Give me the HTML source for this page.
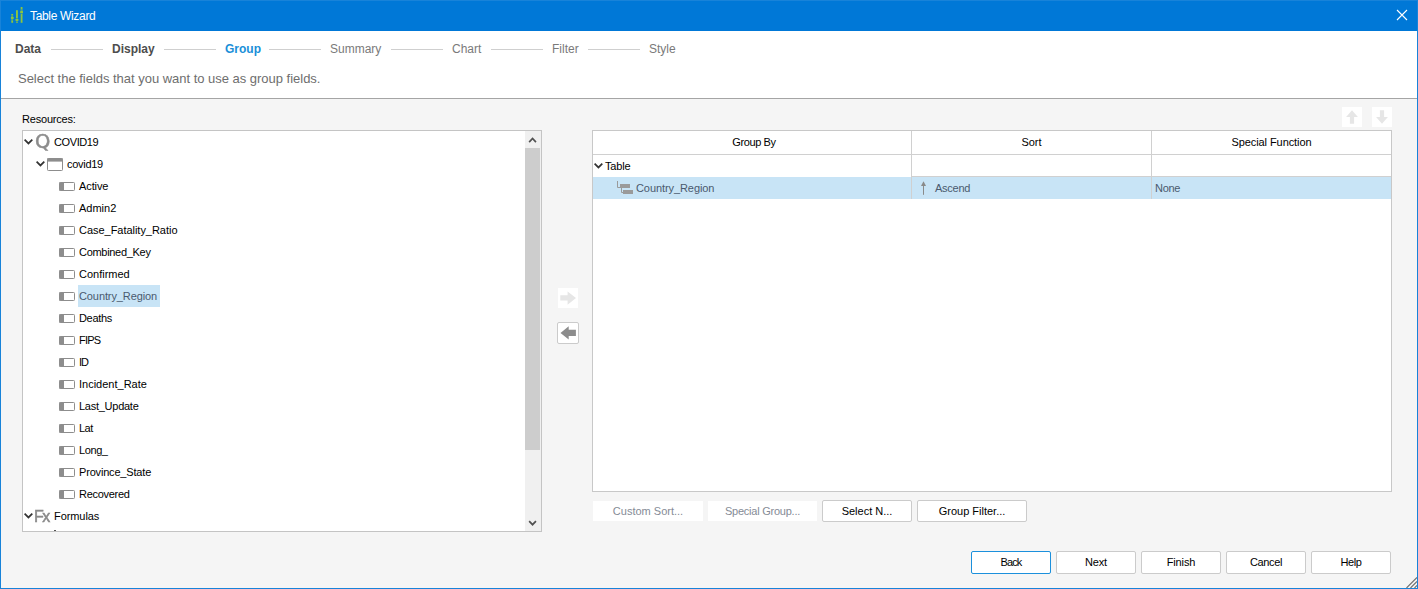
<!DOCTYPE html><html><head><meta charset="utf-8"><title>Table Wizard</title><style>
*{box-sizing:border-box;margin:0;padding:0}
html,body{width:1418px;height:589px;overflow:hidden;background:#f5f5f5}
body{position:relative;font-family:"Liberation Sans",sans-serif;font-size:11px;color:#000}
.abs{position:absolute}
.t{position:absolute;white-space:nowrap;line-height:22px;height:22px}
#titlebar{left:0;top:0;width:1418px;height:31px;background:#0078d7}
#title{left:30px;top:5px;color:#fff;font-size:12px;line-height:22px;letter-spacing:-0.33px}
#hdr{left:1px;top:31px;width:1416px;height:67px;background:#fff}
#sep{left:1px;top:98px;width:1416px;height:1px;background:#a5a5a5}
#bl{left:0;top:0;width:1px;height:589px;background:#1883d9}
#br{left:1417px;top:0;width:1px;height:589px;background:#1883d9}
#bb{left:0;top:588px;width:1418px;height:1px;background:#1883d9}
#bt{left:0;top:0;width:1418px;height:1px;background:#1883d9}
.step{position:absolute;top:38px;line-height:22px;font-size:12px;white-space:nowrap}
.step.b{font-weight:bold;color:#4d4d4d}
.step.cur{font-weight:bold;color:#1b8fd8}
.step.n{color:#7a7a7a}
.sline{position:absolute;top:49px;height:1px;background:#cfcfcf;width:52px}
#desc{left:18px;top:68px;font-size:13px;color:#6e6e6e;line-height:22px;letter-spacing:-0.02px}
#tree{left:22px;top:130px;width:520px;height:402px;background:#fff;border:1px solid #c4c4c4;overflow:hidden}
#sbtrack{left:525px;top:131px;width:16px;height:400px;background:#f0f0f0}
#sbthumb{left:525px;top:148px;width:15px;height:302px;background:#cdcdcd}
.sel{position:absolute;background:#c8e4f6}
.seltext{color:#4a5a6e}
#grid{left:592px;top:130px;width:800px;height:362px;background:#fff;border:1px solid #c8c8c8}
.vl{position:absolute;width:1px;background:#d0d0d0}
.hl{position:absolute;height:1px;background:#d0d0d0}
.btn{position:absolute;background:#fff;border:1px solid #cbcbcb;border-radius:2px;text-align:center;line-height:20px;font-size:11px;white-space:nowrap}
.btn.dis{border:1px solid #f5f5f5;color:#858b96;border-radius:0}
.btn.def{border:1px solid #1c90dc}
.ibtn{position:absolute;background:#fff}
</style></head><body>
<div class="abs" id="titlebar"></div>
<div class="abs" id="hdr"></div><div class="abs" id="sep"></div>
<svg class="abs" style="left:10px;top:6px" width="14" height="18" viewBox="10 6 14 18">
<g fill="#8cc63f"><rect x="11.3" y="14" width="1.8" height="8.8"/><rect x="10.9" y="17" width="2.8" height="1.8"/>
<rect x="16" y="10.2" width="1.9" height="12.6"/><rect x="15.5" y="19" width="2.9" height="1.8"/>
<rect x="20.7" y="7" width="1.8" height="15.8"/><rect x="20.2" y="11.2" width="2.8" height="1.8"/></g>
<g fill="#0078d7"><rect x="11.3" y="15.6" width="1.8" height="0.7"/><rect x="11.3" y="19.6" width="1.8" height="0.7"/><rect x="16" y="21.4" width="1.9" height="0.7"/><rect x="16" y="18" width="1.9" height="0.6"/><rect x="20.7" y="9.6" width="1.8" height="0.8"/><rect x="20.7" y="13.4" width="1.8" height="0.6"/></g></svg>
<div class="t" id="title">Table Wizard</div>
<svg class="abs" style="left:1396px;top:9px" width="12" height="12" viewBox="0 0 12 12"><path d="M1 1 L11 11 M11 1 L1 11" stroke="#fff" stroke-width="1.1" fill="none"/></svg>
<div class="step b" style="left:15px">Data</div>
<div class="step b" style="left:112px">Display</div>
<div class="step cur" style="left:225px">Group</div>
<div class="step n" style="left:330px">Summary</div>
<div class="step n" style="left:452px">Chart</div>
<div class="step n" style="left:552px">Filter</div>
<div class="step n" style="left:649px">Style</div>
<div class="sline" style="left:51px"></div>
<div class="sline" style="left:164px"></div>
<div class="sline" style="left:269px"></div>
<div class="sline" style="left:391px"></div>
<div class="sline" style="left:491px"></div>
<div class="sline" style="left:588px"></div>
<div class="t" id="desc">Select the fields that you want to use as group fields.</div>
<div class="t" style="left:22px;top:108px;letter-spacing:-0.2px">Resources:</div>
<div class="abs" id="tree"></div>
<div class="abs" id="sbtrack"></div><div class="abs" id="sbthumb"></div>
<svg class="abs" style="left:525px;top:131px" width="16" height="17" viewBox="0 0 16 17"><path d="M4.15 11.1 L7.55 7.5 L10.95 11.1" stroke="#505050" stroke-width="1.7" fill="none"/></svg>
<svg class="abs" style="left:525px;top:514px" width="16" height="17" viewBox="0 0 16 17"><path d="M4.15 7.1 L7.55 10.7 L10.95 7.1" stroke="#505050" stroke-width="1.7" fill="none"/></svg>
<svg class="abs" style="left:24px;top:137px" width="10" height="10" viewBox="0 0 10 10"><path d="M0.6 2.6 L4.45 6.45 L8.3 2.6" stroke="#333" stroke-width="1.7" fill="none"/></svg>
<div class="abs" style="left:35px;top:131px;font-family:'DejaVu Sans',sans-serif;font-size:19.5px;line-height:22px;color:#8c8c8c;-webkit-text-stroke:0.5px #8c8c8c;will-change:transform">Q</div>
<div class="t" style="left:54px;top:131px;letter-spacing:-0.4px">COVID19</div>
<svg class="abs" style="left:36px;top:159px" width="10" height="10" viewBox="0 0 10 10"><path d="M0.6 2.6 L4.45 6.45 L8.3 2.6" stroke="#333" stroke-width="1.7" fill="none"/></svg>
<svg class="abs" style="left:47px;top:158px" width="16" height="13" viewBox="0 0 16 13"><rect x="0.5" y="0.5" width="15" height="12" rx="0.8" fill="#fff" stroke="#8d8d8d"/><rect x="0.3" y="0.3" width="15.4" height="3.3" fill="#8d8d8d"/></svg>
<div class="t" style="left:67px;top:153px;letter-spacing:-0.28px">covid19</div>
<svg class="abs" style="left:59px;top:182px" width="16" height="9" viewBox="0 0 16 9"><rect x="0.5" y="0.5" width="15" height="8" rx="0.8" fill="#fff" stroke="#8d8d8d"/><rect x="0.3" y="0.3" width="4.7" height="8.4" fill="#8d8d8d"/></svg>
<div class="t" style="left:79px;top:175px;letter-spacing:-0.1px">Active</div>
<svg class="abs" style="left:59px;top:204px" width="16" height="9" viewBox="0 0 16 9"><rect x="0.5" y="0.5" width="15" height="8" rx="0.8" fill="#fff" stroke="#8d8d8d"/><rect x="0.3" y="0.3" width="4.7" height="8.4" fill="#8d8d8d"/></svg>
<div class="t" style="left:79px;top:197px;letter-spacing:0px">Admin2</div>
<svg class="abs" style="left:59px;top:226px" width="16" height="9" viewBox="0 0 16 9"><rect x="0.5" y="0.5" width="15" height="8" rx="0.8" fill="#fff" stroke="#8d8d8d"/><rect x="0.3" y="0.3" width="4.7" height="8.4" fill="#8d8d8d"/></svg>
<div class="t" style="left:79px;top:219px;letter-spacing:-0.03px">Case_Fatality_Ratio</div>
<svg class="abs" style="left:59px;top:248px" width="16" height="9" viewBox="0 0 16 9"><rect x="0.5" y="0.5" width="15" height="8" rx="0.8" fill="#fff" stroke="#8d8d8d"/><rect x="0.3" y="0.3" width="4.7" height="8.4" fill="#8d8d8d"/></svg>
<div class="t" style="left:79px;top:241px;letter-spacing:-0.3px">Combined_Key</div>
<svg class="abs" style="left:59px;top:270px" width="16" height="9" viewBox="0 0 16 9"><rect x="0.5" y="0.5" width="15" height="8" rx="0.8" fill="#fff" stroke="#8d8d8d"/><rect x="0.3" y="0.3" width="4.7" height="8.4" fill="#8d8d8d"/></svg>
<div class="t" style="left:79px;top:263px;letter-spacing:0px">Confirmed</div>
<svg class="abs" style="left:59px;top:292px" width="16" height="9" viewBox="0 0 16 9"><rect x="0.5" y="0.5" width="15" height="8" rx="0.8" fill="#fff" stroke="#8d8d8d"/><rect x="0.3" y="0.3" width="4.7" height="8.4" fill="#8d8d8d"/></svg>
<div class="sel" style="left:78px;top:285px;width:82px;height:22px"></div>
<div class="t seltext" style="left:79px;top:285px;letter-spacing:-0.1px">Country_Region</div>
<svg class="abs" style="left:59px;top:314px" width="16" height="9" viewBox="0 0 16 9"><rect x="0.5" y="0.5" width="15" height="8" rx="0.8" fill="#fff" stroke="#8d8d8d"/><rect x="0.3" y="0.3" width="4.7" height="8.4" fill="#8d8d8d"/></svg>
<div class="t" style="left:79px;top:307px;letter-spacing:-0.32px">Deaths</div>
<svg class="abs" style="left:59px;top:336px" width="16" height="9" viewBox="0 0 16 9"><rect x="0.5" y="0.5" width="15" height="8" rx="0.8" fill="#fff" stroke="#8d8d8d"/><rect x="0.3" y="0.3" width="4.7" height="8.4" fill="#8d8d8d"/></svg>
<div class="t" style="left:79px;top:329px;letter-spacing:-0.8px">FIPS</div>
<svg class="abs" style="left:59px;top:358px" width="16" height="9" viewBox="0 0 16 9"><rect x="0.5" y="0.5" width="15" height="8" rx="0.8" fill="#fff" stroke="#8d8d8d"/><rect x="0.3" y="0.3" width="4.7" height="8.4" fill="#8d8d8d"/></svg>
<div class="t" style="left:79px;top:351px;letter-spacing:-1px">ID</div>
<svg class="abs" style="left:59px;top:380px" width="16" height="9" viewBox="0 0 16 9"><rect x="0.5" y="0.5" width="15" height="8" rx="0.8" fill="#fff" stroke="#8d8d8d"/><rect x="0.3" y="0.3" width="4.7" height="8.4" fill="#8d8d8d"/></svg>
<div class="t" style="left:79px;top:373px;letter-spacing:0px">Incident_Rate</div>
<svg class="abs" style="left:59px;top:402px" width="16" height="9" viewBox="0 0 16 9"><rect x="0.5" y="0.5" width="15" height="8" rx="0.8" fill="#fff" stroke="#8d8d8d"/><rect x="0.3" y="0.3" width="4.7" height="8.4" fill="#8d8d8d"/></svg>
<div class="t" style="left:79px;top:395px;letter-spacing:-0.26px">Last_Update</div>
<svg class="abs" style="left:59px;top:424px" width="16" height="9" viewBox="0 0 16 9"><rect x="0.5" y="0.5" width="15" height="8" rx="0.8" fill="#fff" stroke="#8d8d8d"/><rect x="0.3" y="0.3" width="4.7" height="8.4" fill="#8d8d8d"/></svg>
<div class="t" style="left:79px;top:417px;letter-spacing:-0.5px">Lat</div>
<svg class="abs" style="left:59px;top:446px" width="16" height="9" viewBox="0 0 16 9"><rect x="0.5" y="0.5" width="15" height="8" rx="0.8" fill="#fff" stroke="#8d8d8d"/><rect x="0.3" y="0.3" width="4.7" height="8.4" fill="#8d8d8d"/></svg>
<div class="t" style="left:79px;top:439px;letter-spacing:-0.4px">Long_</div>
<svg class="abs" style="left:59px;top:468px" width="16" height="9" viewBox="0 0 16 9"><rect x="0.5" y="0.5" width="15" height="8" rx="0.8" fill="#fff" stroke="#8d8d8d"/><rect x="0.3" y="0.3" width="4.7" height="8.4" fill="#8d8d8d"/></svg>
<div class="t" style="left:79px;top:461px;letter-spacing:-0.18px">Province_State</div>
<svg class="abs" style="left:59px;top:490px" width="16" height="9" viewBox="0 0 16 9"><rect x="0.5" y="0.5" width="15" height="8" rx="0.8" fill="#fff" stroke="#8d8d8d"/><rect x="0.3" y="0.3" width="4.7" height="8.4" fill="#8d8d8d"/></svg>
<div class="t" style="left:79px;top:483px;letter-spacing:-0.29px">Recovered</div>
<svg class="abs" style="left:24px;top:511px" width="10" height="10" viewBox="0 0 10 10"><path d="M0.6 2.6 L4.45 6.45 L8.3 2.6" stroke="#333" stroke-width="1.7" fill="none"/></svg>
<div class="abs" style="left:34px;top:506px;font-size:16px;line-height:22px;color:#8a8a8a;letter-spacing:-1.6px;-webkit-text-stroke:0.5px #8a8a8a;will-change:transform">Fx</div>
<div class="t" style="left:54px;top:505px;letter-spacing:-0.08px">Formulas</div>
<div class="abs" style="left:54px;top:530px;width:2px;height:1px;background:#555"></div>
<div class="ibtn" style="left:558px;top:288px;width:20px;height:20px"></div>
<svg class="abs" style="left:558px;top:288px" width="20" height="20" viewBox="558 288 20 20"><path d="M560.3 295.2 H567.6 V291.4 L576 298 L567.6 304.7 V300.6 H560.3 Z" fill="#e6e6e6"/></svg>
<div class="ibtn" style="left:557px;top:322px;width:22px;height:22px;border:1px solid #cbcbcb;border-radius:2px"></div>
<svg class="abs" style="left:557px;top:322px" width="22" height="22" viewBox="557 322 22 22"><path d="M575.9 329.8 H568.7 V326.2 L560.5 332.9 L568.7 339.6 V336 H575.9 Z" fill="#8c8c8c"/></svg>
<div class="ibtn" style="left:1342px;top:107px;width:20px;height:20px"></div>
<svg class="abs" style="left:1342px;top:107px" width="20" height="20" viewBox="1342 107 20 20"><path d="M1352 110.2 L1357.9 117 H1354.1 V123.8 H1349.9 V117 H1346.1 Z" fill="#e6e6e6"/></svg>
<div class="ibtn" style="left:1372px;top:107px;width:20px;height:20px"></div>
<svg class="abs" style="left:1372px;top:107px" width="20" height="20" viewBox="1372 107 20 20"><path d="M1382 123.8 L1387.9 117 H1384.1 V110.2 H1379.9 V117 H1376.1 Z" fill="#e6e6e6"/></svg>
<div class="abs" id="grid"></div>
<div class="hl" style="left:593px;top:154px;width:798px"></div>
<div class="sel" style="left:593px;top:177px;width:798px;height:22px"></div>
<div class="vl" style="left:911px;top:131px;height:68px"></div>
<div class="vl" style="left:1151px;top:131px;height:68px"></div>
<div class="hl" style="left:911px;top:176px;width:480px"></div>
<div class="t" style="left:593px;top:131px;width:322px;text-align:center;letter-spacing:-0.4px">Group By</div>
<div class="t" style="left:912px;top:131px;width:239px;text-align:center">Sort</div>
<div class="t" style="left:1152px;top:131px;width:239px;text-align:center;letter-spacing:-0.08px">Special Function</div>
<svg class="abs" style="left:594px;top:161px" width="10" height="10" viewBox="0 0 10 10"><path d="M0.6 2.6 L4.45 6.45 L8.3 2.6" stroke="#333" stroke-width="1.7" fill="none"/></svg>
<div class="t" style="left:605px;top:155px;letter-spacing:-0.2px">Table</div>
<svg class="abs" style="left:616px;top:180px" width="18" height="15" viewBox="616 180 18 15"><path d="M617.5 181 V187.5 H622 M621.5 187.5 V192.5 H624" stroke="#9a9a9a" stroke-width="1" fill="none"/><rect x="620" y="184" width="10" height="4" fill="#9a9a9a"/><rect x="623" y="190" width="10" height="4" fill="#9a9a9a"/></svg>
<div class="t seltext" style="left:636px;top:177px;letter-spacing:-0.08px">Country_Region</div>
<svg class="abs" style="left:919px;top:180px" width="9" height="16" viewBox="0 0 9 16"><path d="M4.5 3 V14.8" stroke="#8a8a8a" stroke-width="1" fill="none"/><path d="M4.5 1.2 L7 6 H2 Z" fill="#8a8a8a"/></svg>
<div class="t seltext" style="left:935px;top:177px;letter-spacing:-0.25px">Ascend</div>
<div class="t seltext" style="left:1155px;top:177px;letter-spacing:-0.3px">None</div>
<div class="btn dis" style="left:592px;top:500px;width:112px;height:22px">Custom Sort...</div>
<div class="btn dis" style="left:707px;top:500px;width:111px;height:22px;letter-spacing:-0.23px">Special Group...</div>
<div class="btn" style="left:822px;top:500px;width:90px;height:22px">Select N...</div>
<div class="btn" style="left:917px;top:500px;width:110px;height:22px">Group Filter...</div>
<div class="btn def" style="left:971px;top:551px;width:80px;height:23px;line-height:21px;letter-spacing:-0.9px">Back</div>
<div class="btn " style="left:1056px;top:551px;width:80px;height:23px;line-height:21px;letter-spacing:-0.15px">Next</div>
<div class="btn " style="left:1141px;top:551px;width:80px;height:23px;line-height:21px;letter-spacing:-0.1px">Finish</div>
<div class="btn " style="left:1226px;top:551px;width:80px;height:23px;line-height:21px;letter-spacing:-0.4px">Cancel</div>
<div class="btn " style="left:1311px;top:551px;width:80px;height:23px;line-height:21px;letter-spacing:-0.4px">Help</div>
<svg class="abs" style="left:1405px;top:576px" width="12" height="12" viewBox="0 0 12 12"><path d="M1.5 12 L12 1.5 M5.5 12 L12 5.5 M9.5 12 L12 9.5" stroke="#6d6d6d" stroke-width="1.1" fill="none"/></svg>
<div class="abs" id="bt"></div><div class="abs" id="bl"></div><div class="abs" id="br"></div><div class="abs" id="bb"></div>
</body></html>
